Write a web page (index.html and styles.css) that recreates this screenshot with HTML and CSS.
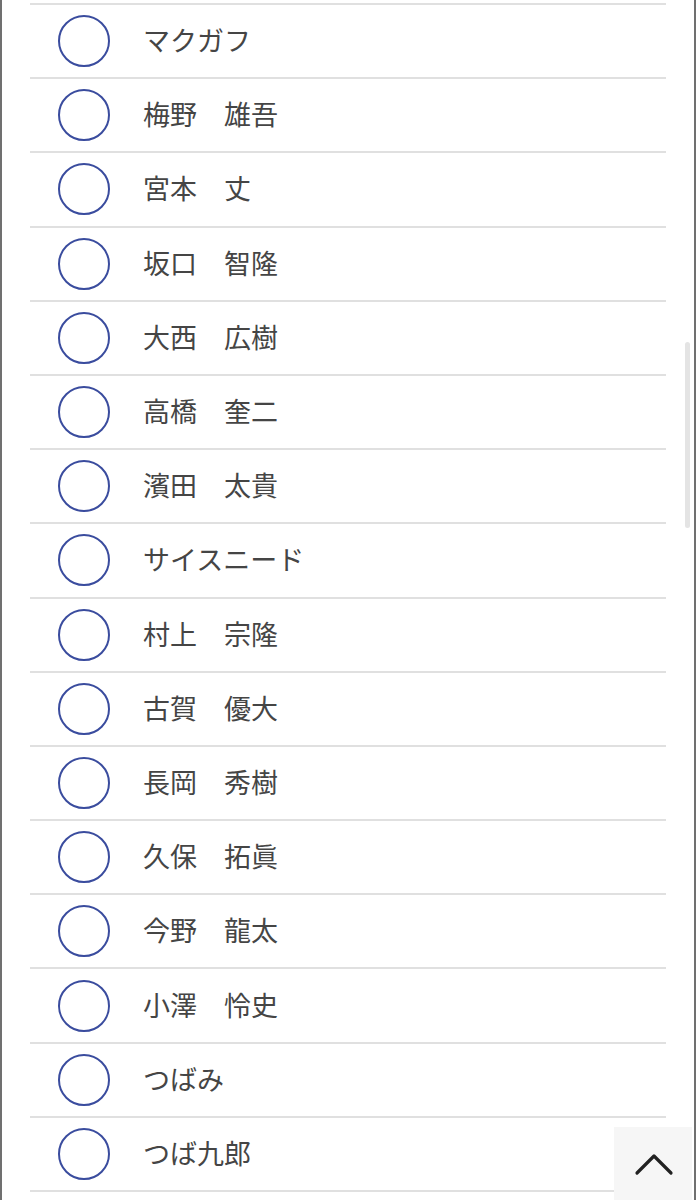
FILE: index.html
```html
<!DOCTYPE html>
<html lang="ja">
<head>
<meta charset="utf-8">
<title>選択リスト</title>
<link rel="stylesheet" href="styles.css">
</head>
<body>
<div class="frame">
  <ul class="list">
    <li class="row"><span class="radio"></span><span class="name">マクガフ</span></li>
    <li class="row"><span class="radio"></span><span class="name">梅野　雄吾</span></li>
    <li class="row"><span class="radio"></span><span class="name">宮本　丈</span></li>
    <li class="row"><span class="radio"></span><span class="name">坂口　智隆</span></li>
    <li class="row"><span class="radio"></span><span class="name">大西　広樹</span></li>
    <li class="row"><span class="radio"></span><span class="name">高橋　奎二</span></li>
    <li class="row"><span class="radio"></span><span class="name">濱田　太貴</span></li>
    <li class="row"><span class="radio"></span><span class="name">サイスニード</span></li>
    <li class="row"><span class="radio"></span><span class="name">村上　宗隆</span></li>
    <li class="row"><span class="radio"></span><span class="name">古賀　優大</span></li>
    <li class="row"><span class="radio"></span><span class="name">長岡　秀樹</span></li>
    <li class="row"><span class="radio"></span><span class="name">久保　拓眞</span></li>
    <li class="row"><span class="radio"></span><span class="name">今野　龍太</span></li>
    <li class="row"><span class="radio"></span><span class="name">小澤　怜史</span></li>
    <li class="row"><span class="radio"></span><span class="name">つばみ</span></li>
    <li class="row"><span class="radio"></span><span class="name">つば九郎</span></li>
  </ul>
  <div class="scrollbar"></div>
  <a class="to-top" href="#" aria-label="ページトップへ">
    <svg width="40" height="24" viewBox="0 0 40 24"><path d="M3 21 L20 4 L37 21" fill="none" stroke="#222" stroke-width="3.2" stroke-linecap="round" stroke-linejoin="round"/></svg>
  </a>
</div>
</body>
</html>
```

FILE: styles.css
```css
html, body {
  margin: 0;
  padding: 0;
  background: #fff;
  height: 1200px;
  overflow: hidden;
}
.frame {
  position: relative;
  box-sizing: border-box;
  width: 696px;
  height: 1200px;
  border-left: 2px solid #707070;
  border-right: 2px solid #707070;
  overflow: hidden;
  font-family: "Noto Sans CJK JP", "Noto Sans", sans-serif;
}
.list {
  list-style: none;
  margin: 0 0 0 28px;
  padding: 0;
  width: 636px;
  padding-top: 3px;
}
.list::before {
  content: "";
  display: block;
  height: 2px;
  background: #e0e0e0;
}
.row {
  box-sizing: border-box;
  height: 74.19px;
  border-bottom: 2px solid #e0e0e0;
  display: flex;
  align-items: center;
  padding-left: 28px;
}
.radio {
  box-sizing: border-box;
  width: 52px;
  height: 52px;
  border: 2px solid #3a4c9e;
  border-radius: 50%;
  flex: none;
}
.name {
  margin-left: 33px;
  padding-bottom: 3px;
  font-size: 27px;
  color: #454545;
  line-height: 1;
}
.scrollbar {
  position: absolute;
  left: 683px;
  top: 342px;
  width: 5px;
  height: 186px;
  border-radius: 3px;
  background: #e4e4e4;
}
.to-top {
  position: absolute;
  left: 612px;
  top: 1127px;
  width: 78px;
  height: 73px;
  background: #f6f6f6;
  display: flex;
  align-items: center;
  justify-content: center;
}
.to-top svg {
  display: block;
  margin-left: 2px;
}
```
